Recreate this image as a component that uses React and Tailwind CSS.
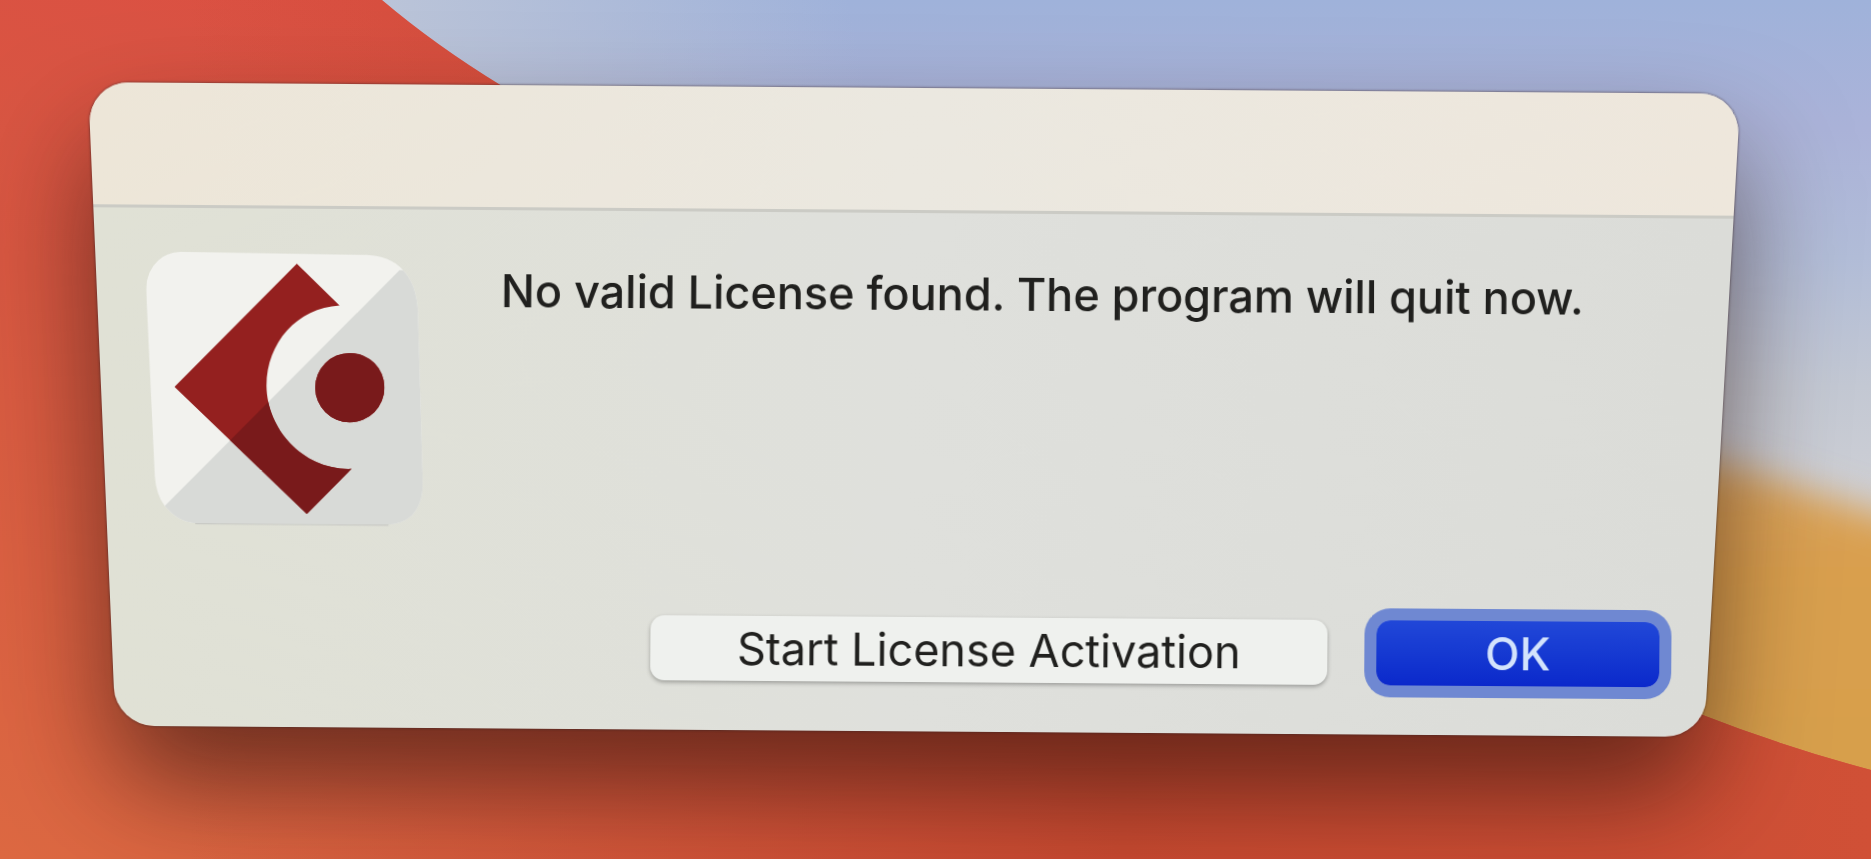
import { useState } from "react";

// Desktop picture behind the dialog
const Wallpaper = () => (
  <svg
    className="absolute inset-0 h-full w-full"
    viewBox="0 0 1871 859"
    preserveAspectRatio="none"
    aria-hidden="true"
  >
    <defs>
      <linearGradient id="red" gradientUnits="userSpaceOnUse" x1="360" y1="0" x2="0" y2="859">
        <stop offset="0" stopColor="#db5043" />
        <stop offset="0.4" stopColor="#d85741" />
        <stop offset="1" stopColor="#dc6841" />
      </linearGradient>
      <linearGradient id="redFade" x1="0" y1="0" x2="1" y2="0">
        <stop offset="0.1" stopColor="#c84930" stopOpacity="0" />
        <stop offset="0.6" stopColor="#c84930" />
        <stop offset="1" stopColor="#d05036" />
      </linearGradient>
      <linearGradient id="sky" x1="0" y1="0" x2="0" y2="1">
        <stop offset="0" stopColor="#9fb2da" />
        <stop offset="0.15" stopColor="#abb3d9" />
        <stop offset="0.3" stopColor="#b2bdd8" />
        <stop offset="0.45" stopColor="#c3c8d3" />
        <stop offset="0.6" stopColor="#cfd0d5" />
      </linearGradient>
      <linearGradient id="skyLeft" gradientUnits="userSpaceOnUse" x1="380" y1="100" x2="850" y2="0">
        <stop offset="0" stopColor="#bcc5d8" />
        <stop offset="1" stopColor="#bcc5d8" stopOpacity="0" />
      </linearGradient>
      <linearGradient id="amber" x1="0" y1="0" x2="0" y2="1">
        <stop offset="0" stopColor="#dba868" />
        <stop offset="0.25" stopColor="#d99f4e" />
        <stop offset="1" stopColor="#d6a04a" />
      </linearGradient>
      <filter id="soft" x="-20%" y="-20%" width="140%" height="140%">
        <feGaussianBlur stdDeviation="18" />
      </filter>
    </defs>
    <rect width="1871" height="859" fill="url(#sky)" />
    <rect width="900" height="300" fill="url(#skyLeft)" />
    <path
      d="M1500 430 Q1700 450 1790 485 Q1850 505 1950 535 L1950 950 L1500 950 Z"
      fill="url(#amber)"
      filter="url(#soft)"
    />
    <path
      d="M0 0 H382 Q435 45 502 86 L900 330 L1620 680 Q1740 735 1871 770 V859 H0 Z"
      fill="url(#red)"
    />
    <path
      d="M0 0 H382 Q435 45 502 86 L900 330 L1620 680 Q1740 735 1871 770 V859 H0 Z"
      fill="url(#redFade)"
    />
  </svg>
);

const AppIcon = () => (
  <svg className="h-[300px] w-[310px] shrink-0" viewBox="0 0 930 900" role="img" aria-label="Cubase">
    <defs>
      <clipPath id="tile">
        <path d="M150 37 L710 46 Q780 50 815 88 Q858 130 863 210 L878 730 Q878 800 840 832 Q812 855 770 855 L190 850 Q140 845 103 798 Q78 765 74 710 L48 150 Q48 95 85 62 Q110 39 150 37 Z" />
      </clipPath>
      <clipPath id="mark">
        <path d="M500 72 L628 198 C500 206 409 310 409 440 C411 570 520 692 664 688 L530 823 L133 442 Z" />
        <circle cx="659" cy="444" r="104" />
      </clipPath>
    </defs>
    <g transform="rotate(-0.4 465 450)">
      <path d="M195 851 L775 856" stroke="#c9cac5" strokeWidth="6" />
      <g clipPath="url(#tile)">
        <rect width="930" height="900" fill="#f2f2ee" />
        <path d="M808 92 L105 798 V900 H930 V92 Z" fill="#d8dad7" />
      </g>
      <g clipPath="url(#mark)">
        <rect width="930" height="900" fill="#94201f" />
        <path d="M808 92 L105 798 V900 H930 V92 Z" fill="#791a1b" />
      </g>
    </g>
  </svg>
);

// Empty window frame, leaning slightly away at the bottom
const WindowFrame = () => (
  <div
    className="absolute inset-0 flex flex-col overflow-hidden rounded-[40px] bg-linear-to-r from-[#e0e1d5] via-[#dfe0dc] to-[#dbdcd8] shadow-[0_0_2px_1px_rgba(60,40,40,0.4),0_60px_110px_0px_rgba(40,15,10,0.6)] [transform:perspective(2000px)_rotateX(-7deg)]"
    aria-hidden="true"
  >
    <div className="h-[122px] border-b-3 border-[#cbcbc5] bg-linear-to-r from-[#ede6d8] via-[#ebe8e0] to-[#eee7dc]" />
  </div>
);

const App = () => {
  const [open, setOpen] = useState(true);

  return (
    <main className="relative min-h-screen overflow-hidden pt-[92px] pr-[149px] pb-[119px] pl-[102px] font-['Inter','Liberation_Sans',sans-serif]">
      <Wallpaper />
      {open && (
        <div
          role="alertdialog"
          aria-labelledby="message"
          className="relative rotate-[0.4deg] text-[#20201e]"
        >
          <WindowFrame />
          <div className="relative flex flex-col pt-[152px] pr-[61px] pb-[58px]">
            <div className="flex gap-[60px] pl-7">
              <AppIcon />
              <p id="message" className="pt-5 text-[45px] leading-[60px] font-medium whitespace-nowrap">
                No valid License found. The program will quit now.
              </p>
            </div>
            <div className="mt-[73px] flex justify-end gap-[49px]">
              <button
                type="button"
                className="h-[65px] w-[677px] rounded-[14px] bg-[#eff1ee] text-[45px] leading-[60px] shadow-[0_2px_4px_rgba(0,0,0,0.3)]"
              >
                Start License Activation
              </button>
              <button
                type="button"
                onClick={() => setOpen(false)}
                className="h-[65px] w-[283px] rounded-[14px] bg-linear-to-b from-[#2147d8] to-[#0b28cb] text-[45px] leading-[60px] font-medium text-[#d3e3fc] ring-12 ring-[#6f88d2]"
              >
                OK
              </button>
            </div>
          </div>
        </div>
      )}
    </main>
  );
};

export default App;
